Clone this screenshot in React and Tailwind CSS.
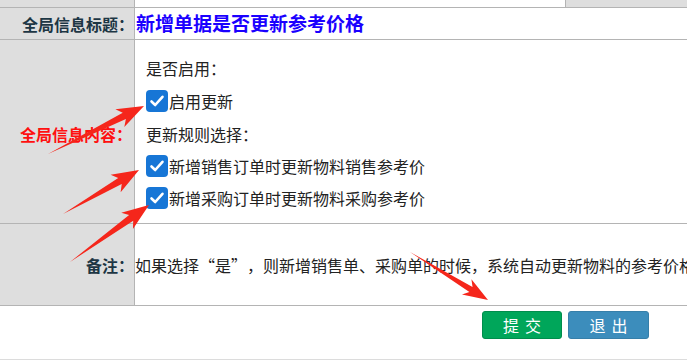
import React from 'react'

const font = { fontFamily: '"Noto Sans CJK SC", "Noto Sans", sans-serif' }

function arrowPoints([x1, y1], [x2, y2], w = 7, hl = 22, hw = 10) {
  const dx = x2 - x1
  const dy = y2 - y1
  const len = Math.hypot(dx, dy)
  const ux = dx / len
  const uy = dy / len
  const nx = -uy
  const ny = ux
  const bx = x2 - ux * hl
  const by = y2 - uy * hl
  const wx = x2 - ux * (hl + 5)
  const wy = y2 - uy * (hl + 5)
  const pts = [
    [x1, y1],
    [bx + (nx * w) / 2, by + (ny * w) / 2],
    [wx + nx * hw, wy + ny * hw],
    [x2, y2],
    [wx - nx * hw, wy - ny * hw],
    [bx - (nx * w) / 2, by - (ny * w) / 2],
  ]
  return pts.map((p) => p.join(',')).join(' ')
}

const arrows = [
  { from: [48, 154], to: [144, 106] },
  { from: [63, 214], to: [139, 170] },
  { from: [70, 262], to: [149, 205] },
  { from: [410, 252], to: [488, 300], w: 6, hl: 20, hw: 9 },
]

function Check({ label }) {
  return (
    <label className="flex items-center h-[22px]">
      <span className="w-[22px] h-[22px] rounded-[4px] bg-[#1776d6] flex items-center justify-center">
        <svg width="16" height="16" viewBox="0 0 16 16">
          <path d="M2.5 8.5 L6.2 12 L13.5 3.8" fill="none" stroke="#fff" strokeWidth="2.6" strokeLinecap="round" strokeLinejoin="round" />
        </svg>
      </span>
      <span className="ml-[1px] text-[16px] text-[#222]">{label}</span>
    </label>
  )
}

export default function App() {
  return (
    <div className="relative w-[687px] h-[360px] bg-white overflow-hidden" style={font}>
      {/* cut-off row above */}
      <div className="flex h-[8px] border-b border-[#b4b4b4]">
        <div className="w-[135px] bg-[#dedede] border-r border-[#b4b4b4]" />
        <div className="w-[431px] bg-white border-r border-[#b4b4b4]" />
        <div className="flex-1 bg-[#dedede]" />
      </div>

      {/* title row */}
      <div className="flex h-[32px] border-b border-[#b4b4b4]">
        <div className="w-[135px] bg-[#dedede] border-r border-[#b4b4b4] flex items-center justify-end text-[16px] font-bold text-[#1d3644]">
          全局信息标题：
        </div>
        <div className="flex-1 flex items-center pl-[1px] text-[19px] font-bold text-[#1a00ff]">
          新增单据是否更新参考价格
        </div>
      </div>

      {/* content row */}
      <div className="flex h-[184px] border-b border-[#b4b4b4]">
        <div className="w-[135px] bg-[#dedede] border-r border-[#b4b4b4] flex items-center justify-end pr-[2px] pt-[4px] text-[16px] font-bold text-[#ff1010]">
          全局信息内容：
        </div>
        <div className="flex-1 flex flex-col pl-[11px] pt-[17px] text-[16px] text-[#222]">
          <div className="h-[22px] flex items-center">是否启用：</div>
          <div className="mt-[11px]"><Check label="启用更新" /></div>
          <div className="mt-[11px] h-[22px] flex items-center">更新规则选择：</div>
          <div className="mt-[10px]"><Check label="新增销售订单时更新物料销售参考价" /></div>
          <div className="mt-[10px]"><Check label="新增采购订单时更新物料采购参考价" /></div>
        </div>
      </div>

      {/* remark row */}
      <div className="flex h-[82px] border-b border-[#b4b4b4]">
        <div className="w-[135px] bg-[#dedede] border-r border-[#b4b4b4] flex items-center justify-end text-[16px] font-bold text-[#1d3644]">
          备注：
        </div>
        <div className="flex-1 flex items-center whitespace-nowrap overflow-hidden text-[16px] text-[#222]">
          <span>
            如果选择<span className="inline-block w-[16px] text-right">“</span>是<span className="inline-block w-[16px]">”</span>，则新增销售单、采购单的时候，系统自动更新物料的参考价格
          </span>
        </div>
      </div>

      {/* buttons */}
      <div className="flex justify-end gap-[6px] pr-[38px] pt-[5px] h-[54px] border-b border-[#dcdcdc]">
        <button className="w-[80px] h-[28px] rounded-[3px] bg-[#00a65a] border border-[#008d4c] text-white text-[16px] tracking-[6px] pl-[6px]">
          提交
        </button>
        <button className="w-[81px] h-[28px] rounded-[3px] bg-[#3c8dbc] border border-[#367fa9] text-white text-[16px] tracking-[6px] pl-[6px]">
          退出
        </button>
      </div>

      <svg className="absolute left-0 top-0 pointer-events-none" width="687" height="360">
        {arrows.map((a, i) => (
          <polygon key={i} points={arrowPoints(a.from, a.to, a.w, a.hl, a.hw)} fill="#f5261b" />
        ))}
      </svg>
    </div>
  )
}
